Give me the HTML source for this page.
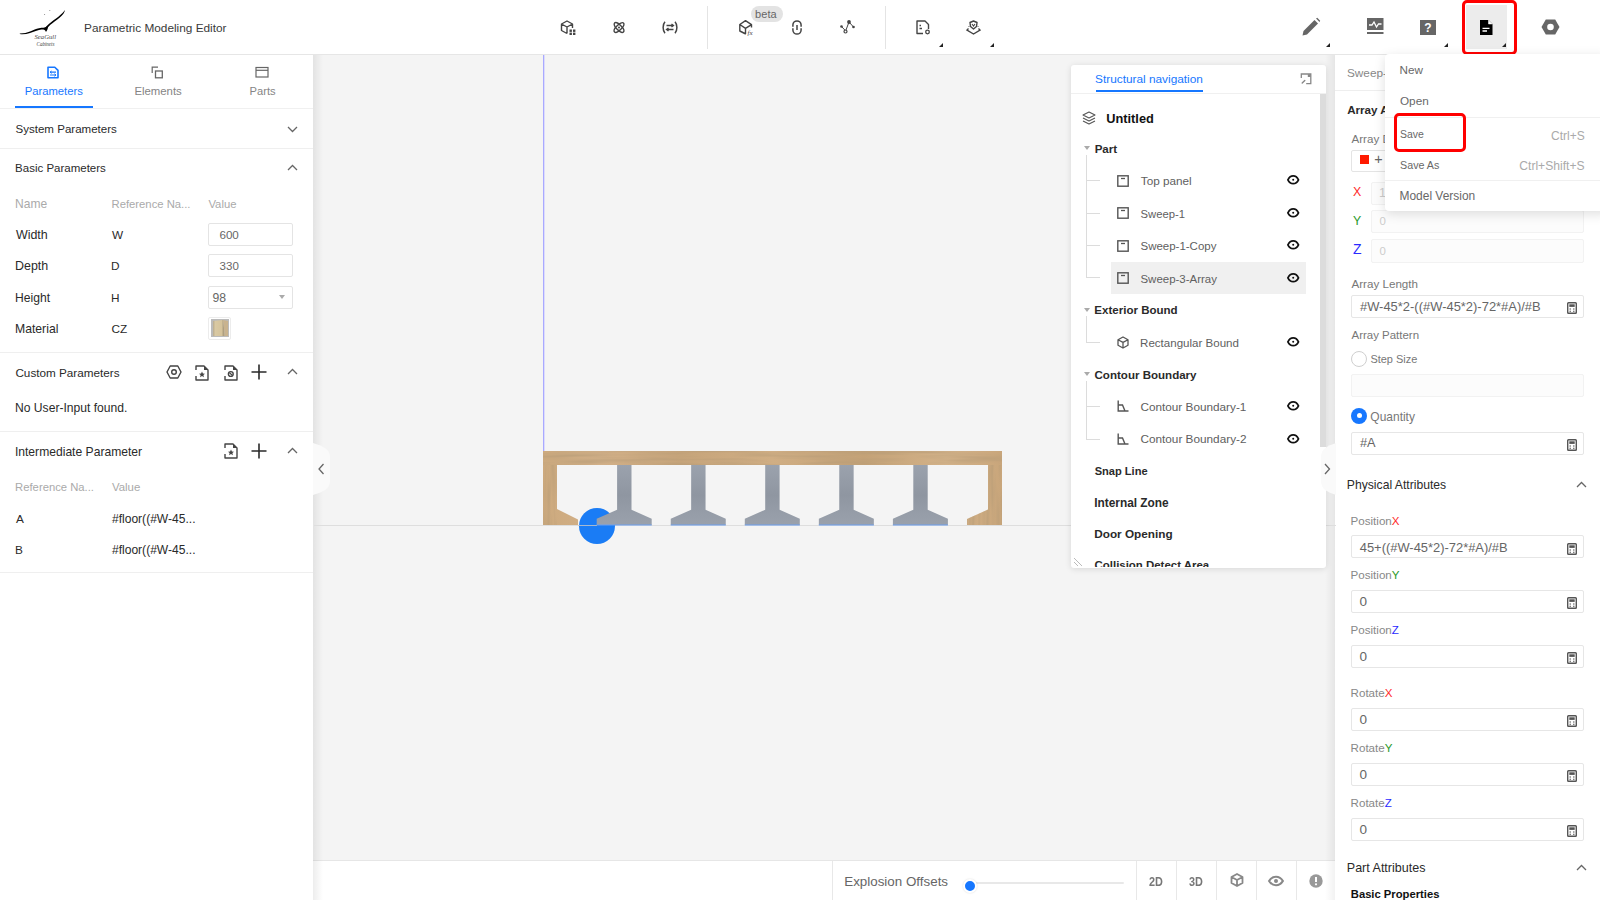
<!DOCTYPE html>
<html><head><meta charset="utf-8"><style>
html,body{margin:0;padding:0;width:1600px;height:900px;overflow:hidden;background:#f4f4f4;}
body{position:relative;font-family:"Liberation Sans",sans-serif;}
.t{position:absolute;white-space:nowrap;}
svg{overflow:visible}
</style></head><body>
<div style="position:absolute;left:0px;top:0px;width:1600px;height:54px;background:#fff"></div>
<div style="position:absolute;left:0px;top:54px;width:1600px;height:1px;background:#e6e6e6"></div>
<div style="position:absolute;left:0px;top:55px;width:313px;height:845px;background:#fff"></div>
<div style="position:absolute;left:313px;top:55px;width:10px;height:845px;background:linear-gradient(90deg,rgba(0,0,0,0.07),rgba(0,0,0,0))"></div>
<div style="position:absolute;left:1325px;top:55px;width:10px;height:845px;background:linear-gradient(270deg,rgba(0,0,0,0.06),rgba(0,0,0,0))"></div>
<div style="position:absolute;left:1335px;top:55px;width:265px;height:845px;background:#fff"></div>
<svg style="position:absolute;left:14px;top:4px;" width="60" height="48" viewBox="0 0 60 48">
<path d="M5.8 29.4 C10 29.2 13 28.6 16 27.4 C19.5 26 22 25 25 24.3 C27.5 23.8 29.5 23.7 31.5 23.9 L31.3 25.6 C29.5 25.4 27.5 25.5 25 26 C21.5 26.8 19 28 16 29 C12.5 30.2 9 30.6 5.8 30.1 Z" fill="#000"/>
<path d="M30.8 24.2 C33.5 21 36 18.8 39.5 16.2 C43 13.7 46 11.6 48.5 9 C49.5 8 50.2 7 50.9 5.9 C50.7 7.5 50 9 48.8 10.5 C46.8 13 44 15 40.6 17.4 C37.5 19.6 35 21.6 32.8 24.8 Z" fill="#000"/>
<path d="M28.6 24.6 C30.5 23.4 32.5 22.6 34 22.2 C34 24.6 33.2 26.6 32 27.9 C31.2 26.5 30.2 25.4 28.6 24.6 Z" fill="#000"/>
<circle cx="30.6" cy="10.4" r="0.5" fill="#777"/><circle cx="35.8" cy="6.5" r="0.5" fill="#777"/>
<text x="20.5" y="34.5" font-family="Liberation Serif" font-style="italic" font-size="6.2" fill="#444" textLength="21.5" lengthAdjust="spacingAndGlyphs">SeaGull</text>
<text x="22.5" y="41.6" font-family="Liberation Serif" font-style="italic" font-size="6" fill="#444" textLength="18" lengthAdjust="spacingAndGlyphs">Cabinets</text>
</svg>
<div class="t" style="left:84.05px;top:23.00px;font-size:11.82px;line-height:11.82px;color:#3a3a3a;">Parametric Modeling Editor</div>
<svg style="position:absolute;left:47px;top:66px;" width="12" height="13" viewBox="0 0 12 13"><path d="M1 1.2 h6.8 l3.2 3.2 v7.4 h-10 z" fill="none" stroke="#1677ff" stroke-width="1.6" stroke-linejoin="round"/><path d="M3 6.2 h6 M3 9 h6" stroke="#1677ff" stroke-width="1.2"/><path d="M4.6 5 l-1.6 1.2 l1.6 1.2 M7.4 7.8 l1.6 1.2 l-1.6 1.2" fill="none" stroke="#1677ff" stroke-width="1"/></svg>
<div class="t" style="left:24.70px;top:86.00px;font-size:11.26px;line-height:11.26px;color:#1677ff;">Parameters</div>
<svg style="position:absolute;left:151px;top:66px;" width="13" height="13" viewBox="0 0 13 13"><path d="M1.2 7 V1.2 H7" fill="none" stroke="#666" stroke-width="1.2"/><rect x="4.5" y="5" width="6.8" height="6.8" fill="none" stroke="#666" stroke-width="1.3"/></svg>
<div class="t" style="left:134.39px;top:86.00px;font-size:11.39px;line-height:11.39px;color:#858585;">Elements</div>
<svg style="position:absolute;left:255px;top:66px;" width="14" height="12" viewBox="0 0 14 12"><rect x="1" y="1.5" width="12" height="9.5" fill="none" stroke="#666" stroke-width="1.2"/><path d="M1 4.3 H13" stroke="#666" stroke-width="1.2"/></svg>
<div class="t" style="left:249.61px;top:86.00px;font-size:11.17px;line-height:11.17px;color:#858585;">Parts</div>
<div style="position:absolute;left:15px;top:106px;width:78px;height:2px;background:#1677ff"></div>
<div style="position:absolute;left:0px;top:108px;width:313px;height:1px;background:#f0f0f0"></div>
<div class="t" style="left:15.48px;top:124.00px;font-size:11.55px;line-height:11.55px;color:#2a2a2a;">System Parameters</div>
<svg style="position:absolute;left:286.5px;top:125.5px;" width="11" height="7" viewBox="0 0 11 7"><path d="M1 1 L5.5 5.5 L10 1" fill="none" stroke="#666" stroke-width="1.3"/></svg>
<div style="position:absolute;left:0px;top:148px;width:313px;height:1px;background:#efefef"></div>
<div class="t" style="left:15.08px;top:163.00px;font-size:11.51px;line-height:11.51px;color:#2a2a2a;">Basic Parameters</div>
<svg style="position:absolute;left:286.5px;top:163.5px;" width="11" height="7" viewBox="0 0 11 7"><path d="M1 6 L5.5 1.5 L10 6" fill="none" stroke="#666" stroke-width="1.3"/></svg>
<div class="t" style="left:15.04px;top:198.00px;font-size:12.02px;line-height:12.02px;color:#aaa;">Name</div>
<div class="t" style="left:111.50px;top:199.00px;font-size:11.29px;line-height:11.29px;color:#aaa;">Reference Na...</div>
<div class="t" style="left:208.44px;top:199.00px;font-size:11.29px;line-height:11.29px;color:#aaa;">Value</div>
<div class="t" style="left:15.94px;top:229.00px;font-size:12.45px;line-height:12.45px;color:#2a2a2a;">Width</div>
<div class="t" style="left:111.94px;top:230.00px;font-size:11.80px;line-height:11.80px;color:#2a2a2a;">W</div>
<div class="t" style="left:15.01px;top:260.00px;font-size:12.44px;line-height:12.44px;color:#2a2a2a;">Depth</div>
<div class="t" style="left:111.06px;top:261.00px;font-size:11.80px;line-height:11.80px;color:#2a2a2a;">D</div>
<div class="t" style="left:15.03px;top:292.00px;font-size:12.12px;line-height:12.12px;color:#2a2a2a;">Height</div>
<div class="t" style="left:111.06px;top:293.00px;font-size:11.80px;line-height:11.80px;color:#2a2a2a;">H</div>
<div class="t" style="left:15.02px;top:323.00px;font-size:12.20px;line-height:12.20px;color:#2a2a2a;">Material</div>
<div class="t" style="left:111.41px;top:324.00px;font-size:11.80px;line-height:11.80px;color:#2a2a2a;">CZ</div>
<div style="position:absolute;left:208px;top:223px;width:83px;height:21px;border:1px solid #e4e4e4;border-radius:2px;background:#fff"></div>
<div class="t" style="left:219.42px;top:229.00px;font-size:11.65px;line-height:11.65px;color:#666;">600</div>
<div style="position:absolute;left:208px;top:254px;width:83px;height:21px;border:1px solid #e4e4e4;border-radius:2px;background:#fff"></div>
<div class="t" style="left:219.60px;top:261.00px;font-size:11.54px;line-height:11.54px;color:#666;">330</div>
<div style="position:absolute;left:208px;top:286px;width:83px;height:21px;border:1px solid #e4e4e4;border-radius:2px;background:#fff"></div>
<div class="t" style="left:212.45px;top:292.00px;font-size:12.20px;line-height:12.20px;color:#666;">98</div>
<svg style="position:absolute;left:279px;top:295px;" width="6" height="4" viewBox="0 0 6 4"><path d="M0 0 H6 L3 4 Z" fill="#aaa"/></svg>
<div style="position:absolute;left:208px;top:317px;width:21px;height:21px;border:1px solid #ececec;border-radius:2px;background:#fff"></div>
<svg style="position:absolute;left:211px;top:319px;" width="18" height="18" viewBox="0 0 18 18"><defs><linearGradient id="wd" x1="0" x2="1"><stop offset="0" stop-color="#b9ab8e"/><stop offset="0.2" stop-color="#d9c9a3"/><stop offset="0.75" stop-color="#d5c39b"/><stop offset="0.85" stop-color="#a99a7c"/><stop offset="1" stop-color="#c8b896"/></linearGradient></defs>
<rect x="0" y="0" width="18" height="18" fill="#bbb"/><path d="M2 2 L12 1 L14 17 L2 17 Z" fill="url(#wd)"/><path d="M12 1 L17 2 L17 17 L14 17 Z" fill="#c9b38e"/></svg>
<div style="position:absolute;left:0px;top:352px;width:313px;height:1px;background:#efefef"></div>
<div class="t" style="left:15.41px;top:367.00px;font-size:11.72px;line-height:11.72px;color:#2a2a2a;">Custom Parameters</div>
<svg style="position:absolute;left:165.5px;top:365px;" width="16" height="14" viewBox="0 0 16 14"><path d="M4.2 1 H11.8 L15 7 L11.8 13 H4.2 L1 7 Z" fill="none" stroke="#444" stroke-width="1.4" stroke-linejoin="round"/><circle cx="8" cy="7" r="2.3" fill="none" stroke="#444" stroke-width="1.4"/></svg>
<svg style="position:absolute;left:195px;top:364.5px;" width="14" height="16" viewBox="0 0 14 16"><path d="M1 5 V1 H9 L13 5 V15 H1 V11" fill="none" stroke="#444" stroke-width="1.4" stroke-linejoin="round"/><path d="M9 1 V5 H13 Z" fill="#444"/><path d="M7 6.5 l0.9 2 l2.1 0.2 l-1.6 1.4 l0.5 2.1 l-1.9 -1.1 l-1.9 1.1 l0.5 -2.1 l-1.6 -1.4 l2.1 -0.2 z" fill="#444"/></svg>
<svg style="position:absolute;left:223.5px;top:364.5px;" width="14" height="16" viewBox="0 0 14 16"><path d="M1 5 V1 H9 L13 5 V15 H1 V11" fill="none" stroke="#444" stroke-width="1.4" stroke-linejoin="round"/><path d="M9 1 V5 H13 Z" fill="#444"/><circle cx="6.8" cy="9" r="2.4" fill="none" stroke="#444" stroke-width="1.4"/><path d="M5.5 7.8 L8.2 10.2" stroke="#444" stroke-width="1.2"/></svg>
<svg style="position:absolute;left:250.5px;top:364px;" width="16" height="16" viewBox="0 0 16 16"><path d="M8 0.5 V15.5 M0.5 8 H15.5" stroke="#2a2a2a" stroke-width="1.6"/></svg>
<svg style="position:absolute;left:286.5px;top:368px;" width="11" height="7" viewBox="0 0 11 7"><path d="M1 6 L5.5 1.5 L10 6" fill="none" stroke="#666" stroke-width="1.3"/></svg>
<div class="t" style="left:15.03px;top:402.00px;font-size:12.12px;line-height:12.12px;color:#2a2a2a;">No User-Input found.</div>
<div style="position:absolute;left:0px;top:431px;width:313px;height:1px;background:#efefef"></div>
<div class="t" style="left:14.91px;top:446.00px;font-size:12.12px;line-height:12.12px;color:#2a2a2a;">Intermediate Parameter</div>
<svg style="position:absolute;left:223.5px;top:443.3px;" width="14" height="16" viewBox="0 0 14 16"><path d="M1 5 V1 H9 L13 5 V15 H1 V11" fill="none" stroke="#444" stroke-width="1.4" stroke-linejoin="round"/><path d="M9 1 V5 H13 Z" fill="#444"/><path d="M7 6.5 l0.9 2 l2.1 0.2 l-1.6 1.4 l0.5 2.1 l-1.9 -1.1 l-1.9 1.1 l0.5 -2.1 l-1.6 -1.4 l2.1 -0.2 z" fill="#444"/></svg>
<svg style="position:absolute;left:250.5px;top:443px;" width="16" height="16" viewBox="0 0 16 16"><path d="M8 0.5 V15.5 M0.5 8 H15.5" stroke="#2a2a2a" stroke-width="1.6"/></svg>
<svg style="position:absolute;left:286.5px;top:447px;" width="11" height="7" viewBox="0 0 11 7"><path d="M1 6 L5.5 1.5 L10 6" fill="none" stroke="#666" stroke-width="1.3"/></svg>
<div class="t" style="left:15.10px;top:482.00px;font-size:11.27px;line-height:11.27px;color:#aaa;">Reference Na...</div>
<div class="t" style="left:111.94px;top:482.00px;font-size:11.42px;line-height:11.42px;color:#aaa;">Value</div>
<div class="t" style="left:16.00px;top:514.00px;font-size:11.80px;line-height:11.80px;color:#2a2a2a;">A</div>
<div class="t" style="left:111.94px;top:513.00px;font-size:12.07px;line-height:12.07px;color:#2a2a2a;">#floor((#W-45...</div>
<div class="t" style="left:15.06px;top:545.00px;font-size:11.80px;line-height:11.80px;color:#2a2a2a;">B</div>
<div class="t" style="left:111.94px;top:544.00px;font-size:12.07px;line-height:12.07px;color:#2a2a2a;">#floor((#W-45...</div>
<div style="position:absolute;left:0px;top:572px;width:313px;height:1px;background:#efefef"></div>
<div style="position:absolute;left:543px;top:55px;width:1px;height:396px;background:#a9a9ff"></div>
<div style="position:absolute;left:544px;top:55px;width:1px;height:396px;background:#dcdcfb"></div>
<div style="position:absolute;left:314px;top:525px;width:757px;height:1px;background:#dedede"></div>
<div style="position:absolute;left:1326px;top:525px;width:10px;height:1px;background:#dedede"></div>
<svg style="position:absolute;left:313px;top:443px;" width="18" height="52" viewBox="0 0 18 52"><path d="M0 0 C10 3 17 6 17 14 V38 C17 46 10 49 0 52 Z" fill="#fafafa"/><path d="M10.5 21 L6 26 L10.5 31" fill="none" stroke="#666" stroke-width="1.3"/></svg>
<div style="position:absolute;left:578.7px;top:507.5px;width:36px;height:36px;background:#1a7cf5;border-radius:50%"></div>
<div style="position:absolute;left:578px;top:525px;width:19px;height:1px;background:rgba(200,200,200,0.8)"></div>
<svg style="position:absolute;left:543px;top:451px;" width="459" height="75" viewBox="0 0 459 75"><defs>
<linearGradient id="wg" x1="0" y1="0" x2="1" y2="0">
<stop offset="0" stop-color="#cdaa7e"/><stop offset="0.12" stop-color="#d2b088"/><stop offset="0.3" stop-color="#c6a47a"/>
<stop offset="0.5" stop-color="#d0ae84"/><stop offset="0.7" stop-color="#c4a277"/><stop offset="0.88" stop-color="#d3b289"/><stop offset="1" stop-color="#c9a67b"/></linearGradient>
<linearGradient id="gg" x1="0" y1="0" x2="0" y2="1">
<stop offset="0" stop-color="#9ba2ad"/><stop offset="0.5" stop-color="#8f96a1"/><stop offset="1" stop-color="#9aa1ac"/></linearGradient>
</defs>
<path d="M0 0 H459 V74 H438 V68 L459 58.4 M0 0" fill="none"/>
<filter id="grain" x="0" y="0" width="100%" height="100%"><feTurbulence type="fractalNoise" baseFrequency="0.015 0.25" numOctaves="2" seed="3"/><feColorMatrix type="matrix" values="0 0 0 0 0.45  0 0 0 0 0.32  0 0 0 0 0.18  0 0 0 1.2 -0.45"/></filter>
<filter id="grainv" x="0" y="0" width="100%" height="100%"><feTurbulence type="fractalNoise" baseFrequency="0.25 0.02" numOctaves="2" seed="5"/><feColorMatrix type="matrix" values="0 0 0 0 0.45  0 0 0 0 0.32  0 0 0 0 0.18  0 0 0 1.2 -0.45"/></filter>
<clipPath id="wclip"><path d="M0 0 H459 V74 H424 V68 L445 58.4 V14 H14 V58 L35 68.4 V74 H0 Z"/></clipPath>
<path d="M0 0 H459 V74 H424 V68 L445 58.4 V14 H14 V58 L35 68.4 V74 H0 Z" fill="url(#wg)"/>
<g clip-path="url(#wclip)"><rect x="0" y="0" width="459" height="14" filter="url(#grain)"/><rect x="0" y="14" width="14" height="60" filter="url(#grainv)"/><rect x="424" y="14" width="35" height="60" filter="url(#grainv)"/></g>
<path d="M74.10 14 H88.50 V58.7 L108.70 67.8 V74 H53.70 V67.8 L74.10 58.7 Z" fill="url(#gg)"/><path d="M53.70 74 H108.70" stroke="#6a9ef0" stroke-width="1"/><path d="M148.15 14 H162.55 V58.7 L182.75 67.8 V74 H127.75 V67.8 L148.15 58.7 Z" fill="url(#gg)"/><path d="M127.75 74 H182.75" stroke="#6a9ef0" stroke-width="1"/><path d="M222.20 14 H236.60 V58.7 L256.80 67.8 V74 H201.80 V67.8 L222.20 58.7 Z" fill="url(#gg)"/><path d="M201.80 74 H256.80" stroke="#6a9ef0" stroke-width="1"/><path d="M296.25 14 H310.65 V58.7 L330.85 67.8 V74 H275.85 V67.8 L296.25 58.7 Z" fill="url(#gg)"/><path d="M275.85 74 H330.85" stroke="#6a9ef0" stroke-width="1"/><path d="M370.30 14 H384.70 V58.7 L404.90 67.8 V74 H349.90 V67.8 L370.30 58.7 Z" fill="url(#gg)"/><path d="M349.90 74 H404.90" stroke="#6a9ef0" stroke-width="1"/></svg>
<div style="position:absolute;left:1071px;top:64.5px;width:255px;height:503px;background:#fff;border-radius:3px;box-shadow:0 1px 6px rgba(0,0,0,0.12)"></div>
<div class="t" style="left:1095.07px;top:74.00px;font-size:11.84px;line-height:11.84px;color:#1677ff;">Structural navigation</div>
<div style="position:absolute;left:1095.5px;top:90px;width:107.5px;height:2px;background:#1677ff"></div>
<div style="position:absolute;left:1071px;top:93px;width:255px;height:1px;background:#f0f0f0"></div>
<svg style="position:absolute;left:1300px;top:72.5px;" width="12" height="12" viewBox="0 0 12 12"><path d="M1.3 5 V1 H10.8 V10.6 H6.2" fill="none" stroke="#888" stroke-width="1.3"/><rect x="7.8" y="1.2" width="2.8" height="2.8" fill="#888"/><path d="M2.2 10 L4.8 7.4" stroke="#888" stroke-width="1.4" stroke-linecap="round"/></svg>
<div style="position:absolute;left:1320px;top:94px;width:6px;height:353px;background:#dcdcdc;border-radius:0"></div>
<svg style="position:absolute;left:1082px;top:111px;" width="14" height="14" viewBox="0 0 14 14"><path d="M7 1 L13 4 L7 7 L1 4 Z" fill="none" stroke="#555" stroke-width="1.1" stroke-linejoin="round"/><path d="M1 7 L7 10 L13 7 M1 10 L7 13 L13 10" fill="none" stroke="#555" stroke-width="1.1" stroke-linejoin="round"/></svg>
<div class="t" style="left:1106.23px;top:113.00px;font-size:12.80px;line-height:12.80px;color:#111;font-weight:bold;">Untitled</div>
<svg style="position:absolute;left:1083.5px;top:146px;" width="6" height="4" viewBox="0 0 6 4"><path d="M0 0 H6 L3 4 Z" fill="#aaa"/></svg>
<div class="t" style="left:1094.65px;top:144.00px;font-size:11.58px;line-height:11.58px;color:#2a2a2a;font-weight:bold;">Part</div>
<div style="position:absolute;left:1086px;top:155px;width:1px;height:123px;background:#dcdcdc"></div>
<div style="position:absolute;left:1110.5px;top:262px;width:195.5px;height:32px;background:#f0f0f0"></div>
<div style="position:absolute;left:1086px;top:180px;width:14px;height:1px;background:#dcdcdc"></div>
<svg style="position:absolute;left:1117px;top:174.5px;" width="12" height="12" viewBox="0 0 12 12"><rect x="0.8" y="0.8" width="10.4" height="10.4" fill="none" stroke="#555" stroke-width="1.4"/><path d="M4 3.5 H8" stroke="#555" stroke-width="1.3"/></svg>
<div class="t" style="left:1140.77px;top:175.00px;font-size:11.74px;line-height:11.74px;color:#606060;">Top panel</div>
<svg style="position:absolute;left:1287.3px;top:175.2px;" width="13" height="10" viewBox="0 0 13 10"><path d="M0.9 4.8 C2.6 1.3 4.8 0.9 6.2 0.9 C7.6 0.9 9.8 1.3 11.5 4.8 C9.8 8.3 7.6 8.7 6.2 8.7 C4.8 8.7 2.6 8.3 0.9 4.8 Z" fill="none" stroke="#111" stroke-width="1.75"/><circle cx="6.2" cy="4.8" r="1" fill="#111"/></svg>
<div style="position:absolute;left:1086px;top:212.5px;width:14px;height:1px;background:#dcdcdc"></div>
<svg style="position:absolute;left:1117px;top:207.0px;" width="12" height="12" viewBox="0 0 12 12"><rect x="0.8" y="0.8" width="10.4" height="10.4" fill="none" stroke="#555" stroke-width="1.4"/><path d="M4 3.5 H8" stroke="#555" stroke-width="1.3"/></svg>
<div class="t" style="left:1140.49px;top:209.00px;font-size:11.28px;line-height:11.28px;color:#606060;">Sweep-1</div>
<svg style="position:absolute;left:1287.3px;top:207.7px;" width="13" height="10" viewBox="0 0 13 10"><path d="M0.9 4.8 C2.6 1.3 4.8 0.9 6.2 0.9 C7.6 0.9 9.8 1.3 11.5 4.8 C9.8 8.3 7.6 8.7 6.2 8.7 C4.8 8.7 2.6 8.3 0.9 4.8 Z" fill="none" stroke="#111" stroke-width="1.75"/><circle cx="6.2" cy="4.8" r="1" fill="#111"/></svg>
<div style="position:absolute;left:1086px;top:245px;width:14px;height:1px;background:#dcdcdc"></div>
<svg style="position:absolute;left:1117px;top:239.5px;" width="12" height="12" viewBox="0 0 12 12"><rect x="0.8" y="0.8" width="10.4" height="10.4" fill="none" stroke="#555" stroke-width="1.4"/><path d="M4 3.5 H8" stroke="#555" stroke-width="1.3"/></svg>
<div class="t" style="left:1140.48px;top:241.00px;font-size:11.49px;line-height:11.49px;color:#606060;">Sweep-1-Copy</div>
<svg style="position:absolute;left:1287.3px;top:240.2px;" width="13" height="10" viewBox="0 0 13 10"><path d="M0.9 4.8 C2.6 1.3 4.8 0.9 6.2 0.9 C7.6 0.9 9.8 1.3 11.5 4.8 C9.8 8.3 7.6 8.7 6.2 8.7 C4.8 8.7 2.6 8.3 0.9 4.8 Z" fill="none" stroke="#111" stroke-width="1.75"/><circle cx="6.2" cy="4.8" r="1" fill="#111"/></svg>
<div style="position:absolute;left:1086px;top:277.4px;width:14px;height:1px;background:#dcdcdc"></div>
<svg style="position:absolute;left:1117px;top:271.9px;" width="12" height="12" viewBox="0 0 12 12"><rect x="0.8" y="0.8" width="10.4" height="10.4" fill="none" stroke="#555" stroke-width="1.4"/><path d="M4 3.5 H8" stroke="#555" stroke-width="1.3"/></svg>
<div class="t" style="left:1140.48px;top:274.00px;font-size:11.47px;line-height:11.47px;color:#606060;">Sweep-3-Array</div>
<svg style="position:absolute;left:1287.3px;top:272.59999999999997px;" width="13" height="10" viewBox="0 0 13 10"><path d="M0.9 4.8 C2.6 1.3 4.8 0.9 6.2 0.9 C7.6 0.9 9.8 1.3 11.5 4.8 C9.8 8.3 7.6 8.7 6.2 8.7 C4.8 8.7 2.6 8.3 0.9 4.8 Z" fill="none" stroke="#111" stroke-width="1.75"/><circle cx="6.2" cy="4.8" r="1" fill="#111"/></svg>
<svg style="position:absolute;left:1083.5px;top:307.5px;" width="6" height="4" viewBox="0 0 6 4"><path d="M0 0 H6 L3 4 Z" fill="#aaa"/></svg>
<div class="t" style="left:1094.35px;top:305.00px;font-size:11.54px;line-height:11.54px;color:#2a2a2a;font-weight:bold;">Exterior Bound</div>
<div style="position:absolute;left:1086px;top:316px;width:1px;height:26px;background:#dcdcdc"></div>
<div style="position:absolute;left:1086px;top:341.5px;width:14px;height:1px;background:#dcdcdc"></div>
<svg style="position:absolute;left:1117px;top:336px;" width="12" height="13" viewBox="0 0 12 13"><path d="M6 1 L11 3.7 V9.3 L6 12 L1 9.3 V3.7 Z M1 3.7 L6 6.4 L11 3.7 M6 6.4 V12" fill="none" stroke="#555" stroke-width="1.3" stroke-linejoin="round"/></svg>
<div class="t" style="left:1140.08px;top:338.00px;font-size:11.56px;line-height:11.56px;color:#606060;">Rectangular Bound</div>
<svg style="position:absolute;left:1287.3px;top:336.7px;" width="13" height="10" viewBox="0 0 13 10"><path d="M0.9 4.8 C2.6 1.3 4.8 0.9 6.2 0.9 C7.6 0.9 9.8 1.3 11.5 4.8 C9.8 8.3 7.6 8.7 6.2 8.7 C4.8 8.7 2.6 8.3 0.9 4.8 Z" fill="none" stroke="#111" stroke-width="1.75"/><circle cx="6.2" cy="4.8" r="1" fill="#111"/></svg>
<svg style="position:absolute;left:1083.5px;top:372px;" width="6" height="4" viewBox="0 0 6 4"><path d="M0 0 H6 L3 4 Z" fill="#aaa"/></svg>
<div class="t" style="left:1094.54px;top:370.00px;font-size:11.55px;line-height:11.55px;color:#2a2a2a;font-weight:bold;">Contour Boundary</div>
<div style="position:absolute;left:1086px;top:381px;width:1px;height:58px;background:#dcdcdc"></div>
<div style="position:absolute;left:1086px;top:405.6px;width:14px;height:1px;background:#dcdcdc"></div>
<svg style="position:absolute;left:1117px;top:400.1px;" width="12" height="12" viewBox="0 0 12 12"><path d="M1.2 0.5 V11 H11.5 M1.2 5 H5.5 L8 11" fill="none" stroke="#555" stroke-width="1.4"/></svg>
<div class="t" style="left:1140.41px;top:401.00px;font-size:11.78px;line-height:11.78px;color:#606060;">Contour Boundary-1</div>
<svg style="position:absolute;left:1287.3px;top:400.8px;" width="13" height="10" viewBox="0 0 13 10"><path d="M0.9 4.8 C2.6 1.3 4.8 0.9 6.2 0.9 C7.6 0.9 9.8 1.3 11.5 4.8 C9.8 8.3 7.6 8.7 6.2 8.7 C4.8 8.7 2.6 8.3 0.9 4.8 Z" fill="none" stroke="#111" stroke-width="1.75"/><circle cx="6.2" cy="4.8" r="1" fill="#111"/></svg>
<div style="position:absolute;left:1086px;top:438.6px;width:14px;height:1px;background:#dcdcdc"></div>
<svg style="position:absolute;left:1117px;top:433.1px;" width="12" height="12" viewBox="0 0 12 12"><path d="M1.2 0.5 V11 H11.5 M1.2 5 H5.5 L8 11" fill="none" stroke="#555" stroke-width="1.4"/></svg>
<div class="t" style="left:1140.41px;top:433.00px;font-size:11.79px;line-height:11.79px;color:#606060;">Contour Boundary-2</div>
<svg style="position:absolute;left:1287.3px;top:433.8px;" width="13" height="10" viewBox="0 0 13 10"><path d="M0.9 4.8 C2.6 1.3 4.8 0.9 6.2 0.9 C7.6 0.9 9.8 1.3 11.5 4.8 C9.8 8.3 7.6 8.7 6.2 8.7 C4.8 8.7 2.6 8.3 0.9 4.8 Z" fill="none" stroke="#111" stroke-width="1.75"/><circle cx="6.2" cy="4.8" r="1" fill="#111"/></svg>
<div class="t" style="left:1094.67px;top:466.00px;font-size:11.09px;line-height:11.09px;color:#2a2a2a;font-weight:bold;">Snap Line</div>
<div class="t" style="left:1094.23px;top:498.00px;font-size:11.86px;line-height:11.86px;color:#2a2a2a;font-weight:bold;">Internal Zone</div>
<div class="t" style="left:1094.23px;top:528.00px;font-size:11.78px;line-height:11.78px;color:#2a2a2a;font-weight:bold;">Door Opening</div>
<div style="position:absolute;left:1071px;top:550px;width:255px;height:17px;overflow:hidden">
<div class="t" style="left:23.54px;top:10.00px;font-size:11.45px;line-height:11.45px;color:#2a2a2a;font-weight:bold;">Collision Detect Area</div>
</div>
<svg style="position:absolute;left:1073px;top:557px;" width="10" height="10" viewBox="0 0 10 10"><path d="M1 1 L9 9 M1 5 L5 9" stroke="#bbb" stroke-width="1"/></svg>
<svg style="position:absolute;left:1320px;top:443px;" width="16" height="52" viewBox="0 0 16 52"><path d="M16 0 C7 3 1 6 1 14 V38 C1 46 7 49 16 52 Z" fill="#fafafa"/><path d="M5 21 L9.5 26 L5 31" fill="none" stroke="#666" stroke-width="1.3"/></svg>
<div style="position:absolute;left:313px;top:860px;width:1022px;height:40px;background:#fff;border-top:1px solid #e6e6e6;box-sizing:border-box"></div>
<div style="position:absolute;left:832px;top:861px;width:1px;height:39px;background:#e8e8e8"></div>
<div style="position:absolute;left:313px;top:860px;width:10px;height:40px;background:linear-gradient(90deg,rgba(0,0,0,0.07),rgba(0,0,0,0))"></div>
<div style="position:absolute;left:1325px;top:860px;width:10px;height:40px;background:linear-gradient(270deg,rgba(0,0,0,0.05),rgba(0,0,0,0))"></div>
<div class="t" style="left:844.23px;top:875.00px;font-size:13.39px;line-height:13.39px;color:#666;">Explosion Offsets</div>
<div style="position:absolute;left:975px;top:882px;width:149px;height:2px;background:#e8e8e8;border-radius:1px"></div>
<div style="position:absolute;left:963px;top:879px;width:14px;height:14px;background:#1677ff;border-radius:50%;border:2px solid #fff;box-sizing:border-box;box-shadow:0 0 2px rgba(0,0,0,0.15)"></div>
<div style="position:absolute;left:1136px;top:861px;width:1px;height:39px;background:#e8e8e8"></div>
<div style="position:absolute;left:1176px;top:861px;width:1px;height:39px;background:#e8e8e8"></div>
<div style="position:absolute;left:1216px;top:861px;width:1px;height:39px;background:#e8e8e8"></div>
<div style="position:absolute;left:1256px;top:861px;width:1px;height:39px;background:#e8e8e8"></div>
<div style="position:absolute;left:1296px;top:861px;width:1px;height:39px;background:#e8e8e8"></div>
<div class="t" style="left:1148.52px;top:875.00px;font-size:13.60px;line-height:13.60px;color:#777;font-weight:bold;transform:scaleX(0.8);transform-origin:0 0;">2D</div>
<div class="t" style="left:1188.63px;top:875.00px;font-size:13.60px;line-height:13.60px;color:#777;font-weight:bold;transform:scaleX(0.8);transform-origin:0 0;">3D</div>
<svg style="position:absolute;left:1229.5px;top:873px;" width="14" height="14" viewBox="0 0 14 14"><path d="M7 1 L12.5 4 V10 L7 13 L1.5 10 V4 Z M1.5 4 L7 7 L12.5 4 M7 7 V13" fill="none" stroke="#888" stroke-width="1.8" stroke-linejoin="round"/></svg>
<svg style="position:absolute;left:1268px;top:876px;" width="16" height="10" viewBox="0 0 16 10"><path d="M1.1 5 C3.5 1 6 0.8 8 0.8 C10 0.8 12.5 1 14.9 5 C12.5 9 10 9.2 8 9.2 C6 9.2 3.5 9 1.1 5 Z" fill="none" stroke="#888" stroke-width="2.1"/><circle cx="8" cy="5" r="2" fill="#888"/></svg>
<svg style="position:absolute;left:1309px;top:874px;" width="14" height="14" viewBox="0 0 14 14"><circle cx="7" cy="7" r="6.7" fill="#999"/><path d="M7 3 V8" stroke="#fff" stroke-width="2"/><circle cx="7" cy="10.3" r="1.1" fill="#fff"/></svg>
<div class="t" style="left:1346.97px;top:68.00px;font-size:11.80px;line-height:11.80px;color:#888;">Sweep-1</div>
<div style="position:absolute;left:1335px;top:90px;width:265px;height:1px;background:#eee"></div>
<div class="t" style="left:1347.21px;top:104.00px;font-size:11.60px;line-height:11.60px;color:#2a2a2a;font-weight:bold;">Array Attributes</div>
<div class="t" style="left:1351.50px;top:133.00px;font-size:11.60px;line-height:11.60px;color:#777;">Array Direction</div>
<div style="position:absolute;left:1351px;top:149.5px;width:233px;height:22.5px;border:1px solid #e4e4e4;border-radius:2px;background:#fff;box-sizing:border-box"></div>
<div style="position:absolute;left:1360px;top:155.3px;width:9.2px;height:9px;background:#ff1a00"></div>
<div class="t" style="left:1374.28px;top:152.00px;font-size:14.43px;line-height:14.43px;color:#666;">+</div>
<div class="t" style="left:1352.99px;top:186.00px;font-size:12.42px;line-height:12.42px;color:#ff2a2a;">X</div>
<div style="position:absolute;left:1370.8px;top:182.2px;width:213.2px;height:23.3px;border:1px solid #f2f2f2;border-radius:2px;background:#fcfcfc;box-sizing:border-box"></div>
<div class="t" style="left:1379.05px;top:187.00px;font-size:12.64px;line-height:12.64px;color:#ccc;">1</div>
<div class="t" style="left:1353.05px;top:215.00px;font-size:12.32px;line-height:12.32px;color:#2a9a2a;">Y</div>
<div style="position:absolute;left:1370.8px;top:210.2px;width:213.2px;height:23.3px;border:1px solid #f2f2f2;border-radius:2px;background:#fcfcfc;box-sizing:border-box"></div>
<div class="t" style="left:1379.54px;top:216.00px;font-size:11.46px;line-height:11.46px;color:#ccc;">0</div>
<div class="t" style="left:1352.88px;top:242.00px;font-size:14.00px;line-height:14.00px;color:#2a2aff;">Z</div>
<div style="position:absolute;left:1370.8px;top:239.3px;width:213.2px;height:23.3px;border:1px solid #f2f2f2;border-radius:2px;background:#fcfcfc;box-sizing:border-box"></div>
<div class="t" style="left:1379.54px;top:246.00px;font-size:11.46px;line-height:11.46px;color:#ccc;">0</div>
<div class="t" style="left:1351.50px;top:278.00px;font-size:11.62px;line-height:11.62px;color:#777;">Array Length</div>
<div style="position:absolute;left:1351.3px;top:294.7px;width:233px;height:23px;border:1px solid #e6e6e6;border-radius:2px;background:#fff;box-sizing:border-box"></div>
<div class="t" style="left:1359.94px;top:301.00px;font-size:12.95px;line-height:12.95px;color:#666;">#W-45*2-((#W-45*2)-72*#A)/#B</div>
<svg style="position:absolute;left:1566.5px;top:301.9px;" width="10" height="12" viewBox="0 0 10 12"><rect x="0.7" y="0.7" width="8.6" height="10.6" rx="0.8" fill="none" stroke="#555" stroke-width="1.4"/><rect x="2.3" y="2.3" width="5.4" height="2.6" fill="#555"/><path d="M2.5 7 H4 M6 7 H7.5 M2.5 9.2 H4 M6 9.2 H7.5" stroke="#555" stroke-width="1.1"/></svg>
<div class="t" style="left:1351.50px;top:330.00px;font-size:11.48px;line-height:11.48px;color:#777;">Array Pattern</div>
<div style="position:absolute;left:1351.3px;top:351.1px;width:16px;height:16px;border:1px solid #cfcfcf;border-radius:50%;background:#fff;box-sizing:border-box"></div>
<div class="t" style="left:1370.41px;top:354.00px;font-size:10.97px;line-height:10.97px;color:#777;">Step Size</div>
<div style="position:absolute;left:1351.3px;top:374.1px;width:233px;height:23.2px;border:1px solid #f2f2f2;border-radius:2px;background:#fcfcfc;box-sizing:border-box"></div>
<div style="position:absolute;left:1351.3px;top:407.7px;width:16px;height:16px;background:#1677ff;border-radius:50%"></div>
<div style="position:absolute;left:1356.8px;top:413.2px;width:5px;height:5px;background:#fff;border-radius:50%"></div>
<div class="t" style="left:1370.36px;top:411.00px;font-size:11.98px;line-height:11.98px;color:#777;">Quantity</div>
<div style="position:absolute;left:1351.3px;top:431.5px;width:233px;height:23px;border:1px solid #e6e6e6;border-radius:2px;background:#fff;box-sizing:border-box"></div>
<div class="t" style="left:1359.94px;top:437.00px;font-size:12.76px;line-height:12.76px;color:#666;">#A</div>
<svg style="position:absolute;left:1566.5px;top:438.7px;" width="10" height="12" viewBox="0 0 10 12"><rect x="0.7" y="0.7" width="8.6" height="10.6" rx="0.8" fill="none" stroke="#555" stroke-width="1.4"/><rect x="2.3" y="2.3" width="5.4" height="2.6" fill="#555"/><path d="M2.5 7 H4 M6 7 H7.5 M2.5 9.2 H4 M6 9.2 H7.5" stroke="#555" stroke-width="1.1"/></svg>
<div class="t" style="left:1346.83px;top:479.00px;font-size:12.17px;line-height:12.17px;color:#2a2a2a;">Physical Attributes</div>
<svg style="position:absolute;left:1576px;top:480.5px;" width="11" height="7" viewBox="0 0 11 7"><path d="M1 6 L5.5 1.5 L10 6" fill="none" stroke="#666" stroke-width="1.3"/></svg>
<div class="t" style="left:1350.57px;top:515.00px;font-size:11.60px;line-height:11.60px;color:#888">Position<span style="color:#ff2a2a">X</span></div>
<div style="position:absolute;left:1351.3px;top:535.3px;width:233px;height:23px;border:1px solid #e6e6e6;border-radius:2px;background:#fff;box-sizing:border-box"></div>
<div class="t" style="left:1359.74px;top:542.00px;font-size:12.91px;line-height:12.91px;color:#666;">45+((#W-45*2)-72*#A)/#B</div>
<svg style="position:absolute;left:1566.5px;top:542.5px;" width="10" height="12" viewBox="0 0 10 12"><rect x="0.7" y="0.7" width="8.6" height="10.6" rx="0.8" fill="none" stroke="#555" stroke-width="1.4"/><rect x="2.3" y="2.3" width="5.4" height="2.6" fill="#555"/><path d="M2.5 7 H4 M6 7 H7.5 M2.5 9.2 H4 M6 9.2 H7.5" stroke="#555" stroke-width="1.1"/></svg>
<div class="t" style="left:1350.57px;top:569.00px;font-size:11.60px;line-height:11.60px;color:#888">Position<span style="color:#2a9a2a">Y</span></div>
<div style="position:absolute;left:1351.3px;top:590.1px;width:233px;height:23px;border:1px solid #e6e6e6;border-radius:2px;background:#fff;box-sizing:border-box"></div>
<div class="t" style="left:1359.46px;top:595.00px;font-size:13.54px;line-height:13.54px;color:#666;">0</div>
<svg style="position:absolute;left:1566.5px;top:597.3000000000001px;" width="10" height="12" viewBox="0 0 10 12"><rect x="0.7" y="0.7" width="8.6" height="10.6" rx="0.8" fill="none" stroke="#555" stroke-width="1.4"/><rect x="2.3" y="2.3" width="5.4" height="2.6" fill="#555"/><path d="M2.5 7 H4 M6 7 H7.5 M2.5 9.2 H4 M6 9.2 H7.5" stroke="#555" stroke-width="1.1"/></svg>
<div class="t" style="left:1350.57px;top:624.00px;font-size:11.60px;line-height:11.60px;color:#888">Position<span style="color:#2a2aff">Z</span></div>
<div style="position:absolute;left:1351.3px;top:644.5px;width:233px;height:23px;border:1px solid #e6e6e6;border-radius:2px;background:#fff;box-sizing:border-box"></div>
<div class="t" style="left:1359.46px;top:650.00px;font-size:13.54px;line-height:13.54px;color:#666;">0</div>
<svg style="position:absolute;left:1566.5px;top:651.7px;" width="10" height="12" viewBox="0 0 10 12"><rect x="0.7" y="0.7" width="8.6" height="10.6" rx="0.8" fill="none" stroke="#555" stroke-width="1.4"/><rect x="2.3" y="2.3" width="5.4" height="2.6" fill="#555"/><path d="M2.5 7 H4 M6 7 H7.5 M2.5 9.2 H4 M6 9.2 H7.5" stroke="#555" stroke-width="1.1"/></svg>
<div class="t" style="left:1350.57px;top:687.00px;font-size:11.60px;line-height:11.60px;color:#888">Rotate<span style="color:#ff2a2a">X</span></div>
<div style="position:absolute;left:1351.3px;top:708px;width:233px;height:23px;border:1px solid #e6e6e6;border-radius:2px;background:#fff;box-sizing:border-box"></div>
<div class="t" style="left:1359.46px;top:713.00px;font-size:13.54px;line-height:13.54px;color:#666;">0</div>
<svg style="position:absolute;left:1566.5px;top:715.2px;" width="10" height="12" viewBox="0 0 10 12"><rect x="0.7" y="0.7" width="8.6" height="10.6" rx="0.8" fill="none" stroke="#555" stroke-width="1.4"/><rect x="2.3" y="2.3" width="5.4" height="2.6" fill="#555"/><path d="M2.5 7 H4 M6 7 H7.5 M2.5 9.2 H4 M6 9.2 H7.5" stroke="#555" stroke-width="1.1"/></svg>
<div class="t" style="left:1350.57px;top:742.00px;font-size:11.60px;line-height:11.60px;color:#888">Rotate<span style="color:#2a9a2a">Y</span></div>
<div style="position:absolute;left:1351.3px;top:763px;width:233px;height:23px;border:1px solid #e6e6e6;border-radius:2px;background:#fff;box-sizing:border-box"></div>
<div class="t" style="left:1359.46px;top:768.00px;font-size:13.54px;line-height:13.54px;color:#666;">0</div>
<svg style="position:absolute;left:1566.5px;top:770.2px;" width="10" height="12" viewBox="0 0 10 12"><rect x="0.7" y="0.7" width="8.6" height="10.6" rx="0.8" fill="none" stroke="#555" stroke-width="1.4"/><rect x="2.3" y="2.3" width="5.4" height="2.6" fill="#555"/><path d="M2.5 7 H4 M6 7 H7.5 M2.5 9.2 H4 M6 9.2 H7.5" stroke="#555" stroke-width="1.1"/></svg>
<div class="t" style="left:1350.57px;top:797.00px;font-size:11.60px;line-height:11.60px;color:#888">Rotate<span style="color:#2a2aff">Z</span></div>
<div style="position:absolute;left:1351.3px;top:818px;width:233px;height:23px;border:1px solid #e6e6e6;border-radius:2px;background:#fff;box-sizing:border-box"></div>
<div class="t" style="left:1359.46px;top:823.00px;font-size:13.54px;line-height:13.54px;color:#666;">0</div>
<svg style="position:absolute;left:1566.5px;top:825.2px;" width="10" height="12" viewBox="0 0 10 12"><rect x="0.7" y="0.7" width="8.6" height="10.6" rx="0.8" fill="none" stroke="#555" stroke-width="1.4"/><rect x="2.3" y="2.3" width="5.4" height="2.6" fill="#555"/><path d="M2.5 7 H4 M6 7 H7.5 M2.5 9.2 H4 M6 9.2 H7.5" stroke="#555" stroke-width="1.1"/></svg>
<div class="t" style="left:1346.80px;top:862.00px;font-size:12.52px;line-height:12.52px;color:#2a2a2a;">Part Attributes</div>
<svg style="position:absolute;left:1576px;top:863.5px;" width="11" height="7" viewBox="0 0 11 7"><path d="M1 6 L5.5 1.5 L10 6" fill="none" stroke="#666" stroke-width="1.3"/></svg>
<div class="t" style="left:1350.77px;top:889.00px;font-size:11.24px;line-height:11.24px;color:#111;font-weight:bold;">Basic Properties</div>
<svg style="position:absolute;left:560px;top:20px;" width="16" height="15" viewBox="0 0 16 15"><path d="M7 1 L12.5 4 L7 7 L1.5 4 Z M1.5 4 V10.5 L7 13.5 M7 7 V13.5 M12.5 4 V8" fill="none" stroke="#444" stroke-width="1.4" stroke-linejoin="round"/><rect x="9.5" y="9.5" width="2.4" height="2.4" fill="#444"/><rect x="13" y="9.5" width="2.4" height="2.4" fill="#444"/><rect x="9.5" y="12.6" width="2.4" height="2.4" fill="#444"/><rect x="13" y="12.6" width="2.4" height="2.4" fill="#444"/></svg>
<svg style="position:absolute;left:612px;top:21px;" width="14" height="13" viewBox="0 0 14 13"><ellipse cx="7" cy="6.5" rx="2.6" ry="6.3" transform="rotate(45 7 6.5)" fill="none" stroke="#444" stroke-width="1.4"/><ellipse cx="7" cy="6.5" rx="2.6" ry="6.3" transform="rotate(-45 7 6.5)" fill="none" stroke="#444" stroke-width="1.4"/><circle cx="7" cy="6.5" r="1" fill="#444"/></svg>
<svg style="position:absolute;left:662px;top:21px;" width="16" height="13" viewBox="0 0 16 13"><path d="M3 0.8 C0.5 3.5 0.5 9.5 3 12.2 M13 0.8 C15.5 3.5 15.5 9.5 13 12.2" fill="none" stroke="#444" stroke-width="1.5"/><path d="M4.5 4.5 H11 M9.5 3 L11.5 4.5 L9.5 6 M11.5 8.5 H5 M6.5 7 L4.5 8.5 L6.5 10" fill="none" stroke="#444" stroke-width="1.3"/></svg>
<div style="position:absolute;left:707px;top:6px;width:1px;height:43px;background:#e4e4e4"></div>
<div style="position:absolute;left:751px;top:6px;width:31.5px;height:16px;background:#e3e3e3;border-radius:8px"></div>
<div class="t" style="left:754.88px;top:9.00px;font-size:11.00px;line-height:11.00px;color:#666;letter-spacing:0.15px;">beta</div>
<svg style="position:absolute;left:738.5px;top:20px;" width="16" height="15" viewBox="0 0 16 15"><path d="M6.5 0.7 L12.5 4.6 L6.5 8.3 L0.8 4.5 Z M0.8 4.5 V11 L6.8 14 M6.5 8.3 V14 M12.5 4.6 V7.5" fill="none" stroke="#444" stroke-width="1.4" stroke-linejoin="round"/><text x="8.5" y="14.5" font-family="Liberation Serif" font-style="italic" font-size="7" fill="#444">fx</text></svg>
<svg style="position:absolute;left:791.5px;top:20px;" width="10" height="15" viewBox="0 0 10 15"><path d="M0.9 6.8 V5 A4.1 4.1 0 0 1 9.1 5 V6.8 M9.1 8.2 V10 A4.1 4.1 0 0 1 0.9 10 V8.2" fill="none" stroke="#444" stroke-width="1.5"/><path d="M5 5 V10" stroke="#444" stroke-width="1.5"/></svg>
<svg style="position:absolute;left:840px;top:20px;" width="15" height="15" viewBox="0 0 15 15"><circle cx="9" cy="2" r="1.9" fill="#444"/><circle cx="1.5" cy="6.5" r="1.3" fill="#444"/><circle cx="13.5" cy="7" r="1.3" fill="#444"/><circle cx="5.5" cy="11.5" r="1.5" fill="none" stroke="#444" stroke-width="1.2"/><path d="M1.5 6.5 L5 10.2 M6 10 L9 2 L13.5 7" fill="none" stroke="#444" stroke-width="1"/></svg>
<div style="position:absolute;left:884.5px;top:6px;width:1.5px;height:43px;background:#e4e4e4"></div>
<svg style="position:absolute;left:916px;top:20px;" width="15" height="15" viewBox="0 0 15 15"><path d="M7 13.5 H1 V1 H9 L12.5 4.5 V9" fill="none" stroke="#444" stroke-width="1.4" stroke-linejoin="round"/><path d="M3.5 5.5 H5 M3.5 8.5 H6" stroke="#444" stroke-width="1.3"/><circle cx="11.5" cy="12" r="1.8" fill="none" stroke="#444" stroke-width="1.3"/></svg>
<svg style="position:absolute;left:939px;top:43.3px;" width="4" height="4" viewBox="0 0 4 4"><path d="M4 0 V4 H0 Z" fill="#222"/></svg>
<svg style="position:absolute;left:966px;top:20px;" width="15" height="15" viewBox="0 0 15 15"><path d="M7.5 1 L11 2.5 L10.5 6.5 L7.5 9 L4.5 6.5 L4 2.5 Z" fill="none" stroke="#444" stroke-width="1.4" stroke-linejoin="round"/><path d="M6 4 L7.5 6 L9 4" fill="none" stroke="#444" stroke-width="1.1"/><path d="M2.5 8.5 L1 10 L7.5 14 L14 10 L12.5 8.5" fill="none" stroke="#444" stroke-width="1.4"/><path d="M2.5 6 L3.2 6.8 M12.5 6 L11.8 6.8" stroke="#444" stroke-width="1"/></svg>
<svg style="position:absolute;left:990px;top:43.3px;" width="4" height="4" viewBox="0 0 4 4"><path d="M4 0 V4 H0 Z" fill="#222"/></svg>
<svg style="position:absolute;left:1300.5px;top:17px;" width="20" height="20" viewBox="0 0 20 20"><path d="M1.5 18.5 L2.5 14 L13.5 3 L17 6.5 L6 17.5 Z" fill="#666"/><path d="M15 1.5 L16.3 0.8 L19.2 3.7 L18.5 5 Z" fill="#666"/></svg>
<svg style="position:absolute;left:1326px;top:43.3px;" width="4" height="4" viewBox="0 0 4 4"><path d="M4 0 V4 H0 Z" fill="#222"/></svg>
<svg style="position:absolute;left:1366.5px;top:18px;" width="17" height="17" viewBox="0 0 17 17"><path d="M0 0 H16.5 V12 H0 Z" fill="#666"/><path d="M2 7 H5 L7 4 L9.5 9 L11.5 6 H14.5" fill="none" stroke="#fff" stroke-width="1.3"/><rect x="0" y="14" width="16.5" height="2" fill="#666"/></svg>
<svg style="position:absolute;left:1419.5px;top:19.5px;" width="16" height="15" viewBox="0 0 16 15"><rect x="0" y="0" width="16" height="15" fill="#666"/><text x="8" y="12" text-anchor="middle" font-family="Liberation Sans" font-weight="bold" font-size="12" fill="#fff">?</text></svg>
<svg style="position:absolute;left:1444px;top:43.3px;" width="4" height="4" viewBox="0 0 4 4"><path d="M4 0 V4 H0 Z" fill="#222"/></svg>
<div style="position:absolute;left:1465.8px;top:5.4px;width:41.7px;height:43.6px;background:#ececec"></div>
<svg style="position:absolute;left:1480.3px;top:19.5px;" width="12.5" height="15" viewBox="0 0 12.5 15"><path d="M0 0 H8.5 L12.5 4 V15 H0 Z" fill="#000"/><path d="M8.5 0 V4 H12.5" fill="#fff" stroke="#fff" stroke-width="0.5"/><path d="M2.5 8.3 H9.5 M2.5 11 H7" stroke="#fff" stroke-width="1.3"/></svg>
<svg style="position:absolute;left:1502.4px;top:43.3px;" width="4" height="4" viewBox="0 0 4 4"><path d="M4 0 V4 H0 Z" fill="#222"/></svg>
<svg style="position:absolute;left:1541px;top:19px;" width="19" height="16" viewBox="0 0 19 16"><path d="M4.8 0.5 H14.2 L18.5 8 L14.2 15.5 H4.8 L0.5 8 Z" fill="#666"/><circle cx="9.5" cy="8" r="3.3" fill="#fff"/></svg>
<div style="position:absolute;left:1462.2px;top:0px;width:55.3px;height:55.3px;border:3.3px solid #ff0000;border-radius:5px;box-sizing:border-box"></div>
<div style="position:absolute;left:1384.8px;top:54px;width:225px;height:156.5px;background:#fff;border-radius:4px;box-shadow:0 3px 12px rgba(0,0,0,0.13)"></div>
<div class="t" style="left:1399.56px;top:64.00px;font-size:11.69px;line-height:11.69px;color:#686868;">New</div>
<div class="t" style="left:1399.97px;top:95.00px;font-size:11.75px;line-height:11.75px;color:#686868;">Open</div>
<div style="position:absolute;left:1384.8px;top:116.5px;width:216px;height:1px;background:#f0f0f0"></div>
<div class="t" style="left:1400.03px;top:130.00px;font-size:10.48px;line-height:10.48px;color:#686868;">Save</div>
<div class="t" style="left:1551.00px;top:130.00px;font-size:11.99px;line-height:11.99px;color:#aaa;">Ctrl+S</div>
<div class="t" style="left:1400.02px;top:160.00px;font-size:10.72px;line-height:10.72px;color:#686868;">Save As</div>
<div class="t" style="left:1519.29px;top:160.00px;font-size:12.12px;line-height:12.12px;color:#aaa;">Ctrl+Shift+S</div>
<div style="position:absolute;left:1384.8px;top:179.5px;width:216px;height:1px;background:#f0f0f0"></div>
<div class="t" style="left:1399.54px;top:191.00px;font-size:11.95px;line-height:11.95px;color:#686868;">Model Version</div>
<div style="position:absolute;left:1393.5px;top:113.3px;width:72.3px;height:38.5px;border:3.3px solid #ff0000;border-radius:5px;box-sizing:border-box"></div>
</body></html>
